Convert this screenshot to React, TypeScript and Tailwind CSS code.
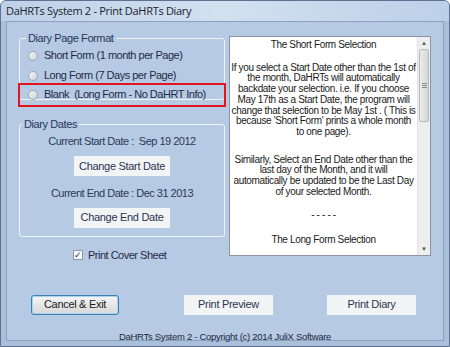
import React from "react";

const ui = { fontFamily: '"Liberation Sans", Arial, sans-serif' };

function Radio({ label }: { label: string }) {
  return (
    <div className="flex items-center h-[20px] pl-[8px]">
      <span className="w-[10px] h-[10px] rounded-full border border-[#9aa6b4] bg-gradient-to-br from-[#f4f4f4] to-[#cfd4da]" />
      <span className="ml-[6px] text-[11px] text-[#1d2b45] tracking-[-0.5px] whitespace-pre">{label}</span>
    </div>
  );
}

function FlatButton({ label, w }: { label: string; w: string }) {
  return (
    <div className={`${w} h-[20px] bg-[#f3f4f6] flex items-center justify-center text-[11px] text-[#2a3550] tracking-[-0.3px]`}>
      {label}
    </div>
  );
}

const para1 = [
  "If you select a Start Date other than the 1st of",
  "the month, DaHRTs will automatically",
  "backdate your selection. i.e. If you choose",
  "May 17th as a Start Date, the program will",
  "change that selection to be May 1st . ( This is",
  "because 'Short Form' prints a whole month",
  "to one page).",
];

const para2 = [
  "Similarly, Select an End Date other than the",
  "last day of the Month, and it will",
  "automatically be updated to be the Last Day",
  "of your selected Month.",
];

export default function App() {
  return (
    <div className="w-[450px] h-[347px] bg-[#a9bfda] border border-[#5d7291] rounded-t-[6px] overflow-hidden flex flex-col" style={ui}>
      {/* title bar */}
      <div className="h-[20px] shrink-0 flex items-center pl-[5px] bg-gradient-to-r from-[#bed1e8] via-[#d2e0f0] to-[#bcd0e8] text-[11px] text-[#1b2230] tracking-[-0.3px]" style={{ fontFamily: '"Open Sans", "Liberation Sans", sans-serif' }}>
        DaHRTs System 2 - Print DaHRTs Diary
      </div>

      {/* client area */}
      <div className="mx-[5px] h-[320px] shrink-0 bg-[#b6cae3] border border-[#8aa2c0] flex flex-col">
        <div className="flex pt-[8px] pl-[12px]">
          {/* left column */}
          <div className="w-[206px] flex flex-col">
            <fieldset className="border border-[#eef3f9] rounded-[3px] h-[70px]">
              <legend className="ml-[6px] px-[2px] text-[11px] text-[#26365a] tracking-[-0.4px]">Diary Page Format</legend>
              <div className="-mt-[1px]">
                <Radio label="Short Form (1 month per Page)" />
                <Radio label="Long Form (7 Days per Page)" />
              </div>
              <div className="-ml-[2px] -mr-[2px] -mt-[3px] border-2 border-[#e3141c] h-[24px] flex items-center">
                <div className="flex items-center pl-[8px]">
                  <span className="w-[10px] h-[10px] rounded-full border border-[#9aa6b4] bg-gradient-to-br from-[#f4f4f4] to-[#cfd4da]" />
                  <span className="ml-[6px] text-[11px] text-[#1d2b45] tracking-[-0.5px] whitespace-pre">{"Blank  (Long Form - No DaHRT Info)"}</span>
                </div>
              </div>
            </fieldset>

            <fieldset className="mt-[16px] border border-[#eef3f9] rounded-[3px] h-[121px] flex flex-col items-center">
              <legend className="ml-[2px] px-[2px] text-[11px] text-[#26365a] tracking-[-0.4px]">Diary Dates</legend>
              <div className="text-[11px] text-[#2a3a58] tracking-[-0.5px] whitespace-pre">{"Current Start Date :  Sep 19 2012"}</div>
              <div className="mt-[7px]">
                <FlatButton label="Change Start Date" w="w-[96px]" />
              </div>
              <div className="mt-[9px] text-[11px] text-[#2a3a58] tracking-[-0.5px]">Current End Date : Dec 31 2013</div>
              <div className="mt-[6px]">
                <FlatButton label="Change End Date" w="w-[96px]" />
              </div>
            </fieldset>

            <div className="flex items-center mt-[10px] pl-[54px]">
              <span className="w-[10px] h-[10px] border border-[#8e9aa8] bg-[#f6f7f8] flex items-center justify-center text-[9px] leading-none text-[#2b3a55]">✓</span>
              <span className="ml-[5px] text-[11px] text-[#1d2b45] tracking-[-0.5px]">Print Cover Sheet</span>
            </div>
          </div>

          {/* text box */}
          <div className="ml-[4px] mt-[6px] w-[202px] h-[220px] border border-[#8c96a2] flex bg-white">
            <div className="flex-1 pt-[3px] text-[10px] leading-[10.7px] text-[#1a1a1a] text-center tracking-[-0.35px] whitespace-nowrap overflow-hidden">
              <p>The Short Form Selection</p>
              <div className="mt-[12px]">
                {para1.map((l) => (
                  <p key={l}>{l}</p>
                ))}
              </div>
              <div className="mt-[17px]">
                {para2.map((l) => (
                  <p key={l}>{l}</p>
                ))}
              </div>
              <p className="mt-[13px]">- - - - -</p>
              <p className="mt-[14px]">The Long Form Selection</p>
            </div>
            <div className="w-[13px] bg-[#eeeeee] border-l border-[#e2e2e2] flex flex-col items-center">
              <div className="h-[12px] flex items-center justify-center text-[6px] text-[#555]">▲</div>
              <div className="w-[10px] h-[73px] rounded-[2px] border border-[#b8b8b8] bg-gradient-to-r from-[#ececec] to-[#d6d6d6] flex flex-col items-center justify-center gap-[1px]">
                <span className="w-[5px] h-px bg-[#8a8a8a]" />
                <span className="w-[5px] h-px bg-[#8a8a8a]" />
                <span className="w-[5px] h-px bg-[#8a8a8a]" />
              </div>
              <div className="flex-1" />
              <div className="h-[12px] flex items-center justify-center text-[6px] text-[#555]">▼</div>
            </div>
          </div>
        </div>

        {/* bottom buttons */}
        <div className="flex items-center mt-[31px] pl-[24px]">
          <div className="w-[88px] h-[20px] border border-[#3d7fb4] rounded-[3px] bg-gradient-to-b from-[#f6f6f6] via-[#e6e6e6] to-[#d8d8d8] flex items-center justify-center text-[11px] text-[#1a1a1a] tracking-[-0.3px] shadow-[inset_0_0_0_1px_#a8d4f2]">
            Cancel &amp; Exit
          </div>
          <div className="ml-[65px]">
            <FlatButton label="Print Preview" w="w-[89px]" />
          </div>
          <div className="ml-[54px]">
            <FlatButton label="Print Diary" w="w-[89px]" />
          </div>
        </div>

        <div className="mt-[15px] text-center text-[9.5px] text-[#1d2840] tracking-[-0.3px]">
          DaHRTs System 2 - Copyright (c) 2014 JuliX Software
        </div>
      </div>
    </div>
  );
}
